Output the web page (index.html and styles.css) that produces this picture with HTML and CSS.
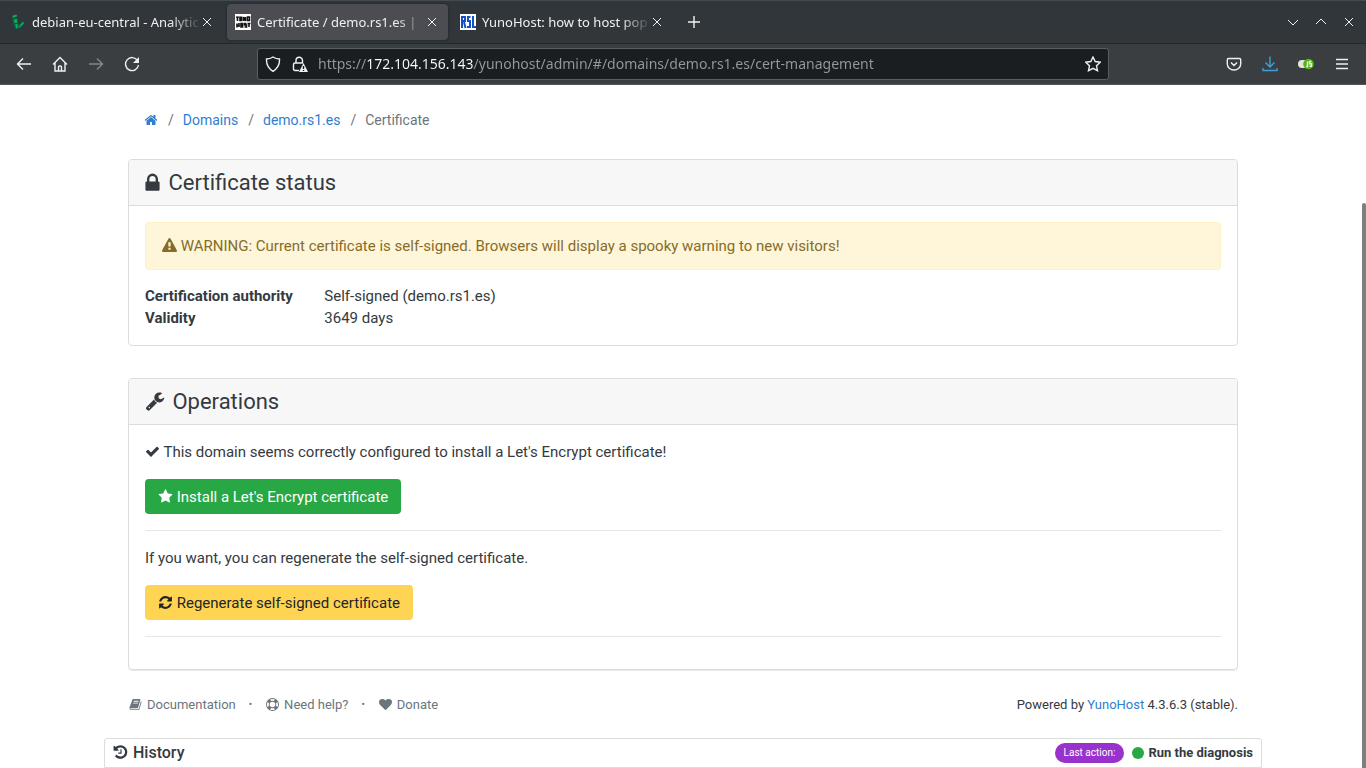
FILE: index.html
```html
<!DOCTYPE html>
<html lang="en">
	<head>
		<meta charset="UTF-8">
		<meta name="viewport" content="width=device-width, initial-scale=1">
		<title>Certificate / demo.rs1.es | YunoHost Admin</title>
		<link rel="stylesheet" href="styles.css">
	</head>
	<body>

		<div class="browser">
			<div class="tabs">
				<div class="tab">
					<svg class="favicon" viewBox="0 0 16 16"><path fill="#00b159" d="M2 2l4-1.500 1.500 1.500-4 2zM3 6l4-1.500.5 4-3.500 1zM5 10.500l2.500-1 .5 4-2 1.500zM9 12l4-4.500 1 2-5 5z"/><path fill="#0b6b45" d="M2 2l1.500 2L4.500 8 4 9 3 7zM4 9.500l1 1 1 4.500-1.500-1.500zM8.500 9.500l1.500 1.500-1 3.500-1-2z"/></svg>
					<span class="tab-title">debian-eu-central - Analytic</span>
					<button class="tab-close" aria-label="Close tab"><svg viewBox="0 0 10 10"><path d="M1 1l8 8M9 1l-8 8"/></svg></button>
				</div>
				<div class="tab active">
					<svg class="favicon" viewBox="0 0 16 16"><path fill="#fff" d="M0 0h16v16H0z"/><path fill="none" stroke="#111" stroke-width="1.6" d="M1.500 2.500l1 2 1-2M2.500 5v2M5 2.500v4h1.500v-4M8.500 7V3l2 4V3M12.500 3h2v3.500h-2zM2 9.500v4M4 9v4M2 11.500h2M6 9.500h1.500V13H6zM11.500 9.500h-2v1.500h2v2h-2M12.500 9.500h3M14 9.500V13"/></svg>
					<span class="tab-title">Certificate / demo.rs1.es |</span>
					<button class="tab-close" aria-label="Close tab"><svg viewBox="0 0 10 10"><path d="M1 1l8 8M9 1l-8 8"/></svg></button>
				</div>
				<div class="tab">
					<svg class="favicon" viewBox="0 0 16 16"><path fill="#fff" d="M0 0h16v16H0z"/><path fill="none" stroke="#1450c8" stroke-width="2" d="M2 14V3h3v4H2M4 8l1.500 6M10.500 3H8v4h2v6H7M13 2v11h3"/></svg>
					<span class="tab-title">YunoHost: how to host pop</span>
					<button class="tab-close" aria-label="Close tab"><svg viewBox="0 0 10 10"><path d="M1 1l8 8M9 1l-8 8"/></svg></button>
				</div>
				<button class="new-tab" aria-label="New tab"><svg viewBox="0 0 12 12"><path d="M6 0v12M0 6h12"/></svg></button>
				<div class="window-controls">
					<button aria-label="Minimize"><svg viewBox="0 0 12 12"><path d="M1 4l5 5 5-5"/></svg></button>
					<button aria-label="Maximize"><svg viewBox="0 0 12 12"><path d="M1 8l5-5 5 5"/></svg></button>
					<button aria-label="Close"><svg viewBox="0 0 12 12"><path d="M2 2l8 8M10 2l-8 8"/></svg></button>
				</div>
			</div>

			<div class="toolbar">
				<div class="nav-buttons">
					<button aria-label="Back"><svg viewBox="0 0 16 16"><path d="M15 8H1.500M7 2.500L1.500 8 7 13.500"/></svg></button>
					<button aria-label="Home"><svg viewBox="0 0 16 16"><path d="M1 8.500l7-7 7 7M3 7v8h10V7M6.500 15v-4q0-1 1-1h1q1 0 1 1v4"/></svg></button>
					<button aria-label="Forward" disabled><svg viewBox="0 0 16 16"><path d="M1 8h13.500M9 2.500L14.500 8 9 13.500"/></svg></button>
					<button aria-label="Reload"><svg viewBox="0 0 16 16"><path d="M13.500 4.500A6.500 6.500 0 1 0 14.500 9"/><path class="solid" d="M15 1v6H9z"/></svg></button>
				</div>
				<div class="url-bar">
					<svg class="shield" viewBox="0 0 16 16"><path d="M8 1q3 2 6.500 2 .5 8-6.500 12.300Q1 11 1.500 3 5 3 8 1z"/></svg>
					<svg class="insecure" viewBox="0 0 16 16"><path d="M7 14.500H3q-1.500 0-1.500-1.500V8.500Q1.500 7 3 7h8M4 7V4.500a3.200 3.200 0 0 1 6.500 0V7"/><path class="solid" d="M11.500 7l4.500 9H7z"/><path class="mark" d="M11.500 10v3M11.500 14v1"/></svg>
					<input type="text" class="url" aria-label="Address" value="https://172.104.156.143/yunohost/admin/#/domains/demo.rs1.es/cert-management">
					<button aria-label="Bookmark"><svg viewBox="0 0 16 16"><path d="M8 1l2.200 4.500 5 .7-3.700 3.500 1 5L8 12.300l-4.500 2.400 1-5L.8 6.200l5-.7z"/></svg></button>
				</div>
				<div class="tools">
					<button aria-label="Pocket"><svg viewBox="0 0 16 16"><path d="M2.500 2.500h11q1.200 0 1.200 1.200V8a6.700 6 0 0 1-13.400 0V3.700q0-1.200 1.200-1.200zM5 6.500l3 3 3-3"/></svg></button>
					<button class="download" aria-label="Downloads"><svg viewBox="0 0 16 16"><path d="M8 .5v10M3.500 6.500L8 11l4.500-4.500M1 12v2.500h14V12"/></svg></button>
					<button aria-label="JavaScript toggle"><svg class="js-toggle" viewBox="0 0 16 16"><rect class="track" x="0" y="4" width="14" height="8" rx="4"/><circle class="knob" cx="10.500" cy="8" r="5.300"/><path d="M9.500 5.500v5H8M13.500 5.500h-2v2.300h2v2.500h-2"/></svg></button>
					<button aria-label="Menu"><svg viewBox="0 0 16 16"><path d="M2 3.500h12M2 8h12M2 12.500h12"/></svg></button>
				</div>
			</div>
		</div>

		<div class="container">
			<nav aria-label="breadcrumb">
				<ol class="breadcrumb">
					<li><a href="#/" aria-label="Home"><svg class="icon" viewBox="0 0 1792 1792"><path d="M1472 992v480q0 26-19 45t-45 19h-384v-384h-256v384h-384q-26 0-45-19t-19-45v-480q0-1 .5-3t.5-3l575-474 575 474q1 2 1 6zm223-69l-62 74q-8 9-21 11h-3q-13 0-21-7l-692-577-692 577q-12 8-24 7-13-2-21-11l-62-74q-8-10-7-23.5t11-21.5l719-599q32-26 76-26t76 26l244 204v-195q0-14 9-23t23-9h192q14 0 23 9t9 23v408l219 182q10 8 11 21.5t-7 23.5z"/></svg></a></li>
					<li><a href="#/domains">Domains</a></li>
					<li><a href="#/domains/demo.rs1.es">demo.rs1.es</a></li>
					<li>Certificate</li>
				</ol>
			</nav>

			<main>
				<section class="card">
					<h2 class="card-header">
						<svg class="icon icon-lock" viewBox="320 0 1152 1792"><path d="M640 768h512v-192q0-106-75-181t-181-75-181 75-75 181v192zm832 96v576q0 40-28 68t-68 28h-960q-40 0-68-28t-28-68v-576q0-40 28-68t68-28h32v-192q0-184 132-316t316-132 316 132 132 316v192h32q40 0 68 28t28 68z"/></svg>
						Certificate status
					</h2>
					<div class="card-body">
						<div class="alert">
							<svg class="icon" viewBox="0 0 1792 1792"><path d="M1024 1375v-190q0-14-9.5-23.5t-22.5-9.5h-192q-13 0-22.5 9.5t-9.500 23.5v190q0 14 9.500 23.5t22.500 9.500h192q13 0 22.500-9.500t9.500-23.500zm-2-374l18-459q0-12-10-19-13-11-24-11h-220q-11 0-24 11-10 7-10 21l17 457q0 10 10 16.500t24 6.500h185q14 0 23.500-6.500t10.500-16.500zm-14-934l768 1408q35 63-2 126-17 29-46.500 46t-63.500 17h-1536q-34 0-63.500-17t-46.500-46q-37-63-2-126l768-1408q17-31 47-49t65-18 65 18 47 49z"/></svg>
							WARNING: Current certificate is self-signed. Browsers will display a spooky warning to new visitors!
						</div>
						<dl class="info">
							<dt>Certification authority</dt>
							<dd>Self-signed (demo.rs1.es)</dd>
							<dt>Validity</dt>
							<dd>3649 days</dd>
						</dl>
					</div>
				</section>

				<section class="card">
					<h2 class="card-header">
						<svg class="icon" viewBox="0 0 1792 1792"><path d="M448 1472q0-26-19-45t-45-19-45 19-19 45 19 45 45 19 45-19 19-45zm644-420l-682 682q-37 37-90 37-52 0-91-37l-106-108q-38-36-38-90 0-53 38-91l681-681q39 98 114.500 173.500t173.500 114.500zm634-435q0 39-23 106-47 134-164.500 217.500t-258.500 83.500q-185 0-316.500-131.500t-131.500-316.500 131.500-316.500 316.500-131.500q58 0 121.500 16.500t107.500 46.500q16 11 16 28t-16 28l-293 169v224l193 107q5-3 79-48.500t135.500-81 70.500-35.500q15 0 23.500 10t8.500 25z"/></svg>
						Operations
					</h2>
					<div class="card-body">
						<p>
							<svg class="icon" viewBox="0 0 1792 1792"><path d="M1671 566q0 40-28 68l-724 724-136 136q-28 28-68 28t-68-28l-136-136-362-362q-28-28-28-68t28-68l136-136q28-28 68-28t68 28l294 295 656-657q28-28 68-28t68 28l136 136q28 28 28 68z"/></svg>
							This domain seems correctly configured to install a Let's Encrypt certificate!
						</p>
						<button class="btn btn-success">
							<svg class="icon" viewBox="0 0 1792 1792"><path d="M1728 647q0 22-26 48l-363 354 86 500q1 7 1 20 0 21-10.500 35.500t-30.500 14.500q-19 0-40-12l-449-236-449 236q-22 12-40 12-21 0-31.500-14.500t-10.500-35.500q0-6 2-20l86-500-364-354q-25-27-25-48 0-37 56-46l502-73 225-455q19-41 49-41t49 41l225 455 502 73q56 9 56 46z"/></svg>
							Install a Let's Encrypt certificate
						</button>
						<hr>
						<p>If you want, you can regenerate the self-signed certificate.</p>
						<button class="btn btn-warning">
							<svg class="icon" viewBox="0 0 1792 1792"><path d="M1639 1056q0 5-1 7-64 268-268 434.500t-478 166.500q-146 0-282.500-55t-243.500-157l-129 129q-19 19-45 19t-45-19-19-45v-448q0-26 19-45t45-19h448q26 0 45 19t19 45-19 45l-137 137q71 66 161 102t187 36q134 0 250-65t186-179q11-17 53-117 8-23 30-23h192q13 0 22.500 9.500t9.500 22.500zm25-800v448q0 26-19 45t-45 19h-448q-26 0-45-19t-19-45 19-45l138-138q-148-137-349-137-134 0-250 65t-186 179q-11 17-53 117-8 23-30 23h-199q-13 0-22.500-9.500t-9.500-22.500v-7q65-268 270-434.500t480-166.500q146 0 284 55.500t245 156.500l130-129q19-19 45-19t45 19 19 45z"/></svg>
							Regenerate self-signed certificate
						</button>
						<hr>
					</div>
				</section>
			</main>

			<footer class="footer">
				<nav class="footer-links">
					<a href="#docs"><svg class="icon" viewBox="0 0 1792 1792"><path d="M1703 478q40 57 18 129l-275 906q-19 64-76.500 107.500t-122.500 43.500h-923q-77 0-148.500-53.500t-99.500-131.500q-24-67-2-127 0-4 3-27t4-37q1-8-3-21.500t-3-19.500q2-11 8-21t16.500-23.500 16.500-23.500q23-38 45-91.500t30-91.500q3-10 .5-30t-.5-28q3-11 17-28t17-23q21-36 42-92t25-90q1-9-2.500-32t.5-28q4-13 22-30.500t22-22.500q19-26 42.500-84.500t27.500-96.500q1-8-3-25.500t-2-26.500q2-8 9-18t18-23 17-21q8-12 16.500-30.500t15-35 16-36 19.500-32 26.500-23.500 36-11.500 47.500 5.500l-1 3q38-9 51-9h761q74 0 114 56t18 130l-274 906q-36 119-71.500 153.500t-128.500 34.500h-869q-27 0-38 15-11 16-1 43 24 70 144 70h923q29 0 56-15.500t35-41.500l300-987q7-22 5-57 38 15 59 43zm-1064 2q-4 13 2 22.500t20 9.500h608q13 0 25.500-9.500t16.500-22.500l21-64q4-13-2-22.500t-20-9.500h-608q-13 0-25.500 9.500t-16.500 22.500zm-83 256q-4 13 2 22.500t20 9.500h608q13 0 25.500-9.500t16.500-22.500l21-64q4-13-2-22.500t-20-9.500h-608q-13 0-25.500 9.500t-16.500 22.500z"/></svg>Documentation</a>
					<span class="dot">•</span>
					<a href="#help"><svg class="icon" viewBox="0 0 14 14"><path fill-rule="evenodd" d="M7 0a7 7 0 1 1 0 14A7 7 0 0 1 7 0zM7 4a3 3 0 1 0 0 6 3 3 0 0 0 0-6zM4.300 1.700L5.700 3.200a4 4 0 0 1 2.600 0L9.700 1.700a6 6 0 0 0-5.400 0zM4.300 12.300a6 6 0 0 0 5.400 0l-1.400-1.500a4 4 0 0 1-2.600 0zM1.700 4.300a6 6 0 0 0 0 5.400l1.500-1.400a4 4 0 0 1 0-2.600zM12.300 4.300l-1.500 1.400a4 4 0 0 1 0 2.600l1.500 1.400a6 6 0 0 0 0-5.400z"/></svg>Need help?</a>
					<span class="dot">•</span>
					<a href="#donate"><svg class="icon" viewBox="0 0 1792 1792"><path d="M896 1664q-26 0-44-18l-624-602q-10-8-27.500-26t-55.500-65.500-68-97.500-53.500-121-23.500-138q0-220 127-344t351-124q62 0 126.500 21.500t120 58 95.500 68.500 76 68q36-36 76-68t95.500-68.500 120-58 126.500-21.500q224 0 351 124t127 344q0 221-229 450l-623 600q-18 18-44 18z"/></svg>Donate</a>
				</nav>
				<p class="powered">Powered by <a href="#yunohost">YunoHost</a> 4.3.6.3 (stable).</p>
			</footer>
		</div>

		<div class="history">
			<h2>
				<svg class="icon" viewBox="128 0 1664 1792"><path d="M1664 896q0 156-61 298t-164 245-245 164-298 61q-172 0-327-72.500t-264-204.500q-7-10-6.500-22.500t8.500-20.500l137-138q10-9 25-9 16 2 23 12 73 95 179 147t225 52q104 0 198.500-40.500t163.500-109.500 109.500-163.500 40.500-198.500-40.500-198.500-109.500-163.500-163.500-109.500-198.500-40.500q-98 0-188 35.500t-160 101.500l137 138q31 30 14 69-17 40-59 40h-448q-26 0-45-19t-19-45v-448q0-42 40-59 39-17 69 14l130 129q107-101 244.500-156.500t284.500-55.500q156 0 298 61t245 164 164 245 61 298zm-640-288v448q0 14-9 23t-23 9h-320q-14 0-23-9t-9-23v-64q0-14 9-23t23-9h224v-352q0-14 9-23t23-9h64q14 0 23 9t9 23z"/></svg>
				History
			</h2>
			<div class="last-action">
				<span class="badge">Last action:</span>
				<span class="status"></span>
				<strong>Run the diagnosis</strong>
			</div>
		</div>

		<div class="scroll-thumb"></div>
	</body>
</html>
```
FILE: styles.css
```css
*{
	box-sizing:border-box;
}
body{
	margin:0;
	padding:0;
	min-height:100vh;
	display:flex;
	flex-direction:column;
	background:#fff;
	color:#343a40;
	font-family:Roboto, sans-serif;
	font-size:14px;
	line-height:22px;
}
a{
	color:#2f7ed0;
	text-decoration:none;
}
button{
	font:inherit;
	color:inherit;
	border:0;
	padding:0;
	background:none;
}

/* browser window */
.browser{
	background:#3b3e41;
	color:#eff0f1;
	border-bottom:1px solid #54585b;
	font-family:"Noto Sans", sans-serif;
	font-size:13px;
}
.browser svg{
	display:block;
	width:16px;
	height:16px;
	flex:none;
}
.browser button svg,
.url-bar svg{
	fill:none;
	stroke:currentColor;
	stroke-width:1.4;
}
.browser svg .solid{
	fill:currentColor;
	stroke:none;
}
.browser svg .mark{
	stroke:#1b1e20;
}
.js-toggle .track{
	fill:#e4e4e0;
	stroke:none;
}
.js-toggle .knob{
	fill:#52b70d;
	stroke:none;
}

.tabs{
	display:flex;
	align-items:center;
	gap:4px;
	height:44px;
	padding:0 11px 0 2px;
	background:#31363b;
	border-top:1px solid #434a52;
	border-bottom:1px solid #25282b;
}
.tab{
	display:flex;
	align-items:center;
	width:221px;
	height:36px;
	padding:0 11px 0 8px;
	border-radius:4px;
}
.tab.active{
	background:#4b4d52;
	box-shadow:0 0 3px #1f2225;
}
.favicon{
	margin-right:6px;
}
.tab-title{
	flex:1;
	min-width:0;
	overflow:hidden;
	white-space:nowrap;
	-webkit-mask-image:linear-gradient(to left, transparent, #000 32px);
	mask-image:linear-gradient(to left, transparent, #000 32px);
}
.browser .tab-close svg{
	width:10px;
	height:10px;
	stroke-width:1;
}
.new-tab{
	margin-left:11px;
}
.browser .new-tab svg{
	width:12px;
	height:12px;
}
.window-controls{
	display:flex;
	gap:16px;
	margin-left:auto;
}
.browser .window-controls svg{
	width:12px;
	height:12px;
	stroke-width:1;
}

.toolbar{
	display:flex;
	align-items:center;
	height:40px;
	padding:0 16px;
}
.nav-buttons,
.tools{
	display:flex;
	gap:20px;
}
.nav-buttons button:disabled{
	opacity:.4;
}
.download{
	color:#3d9fd6;
}
.url-bar{
	flex:1;
	display:flex;
	align-items:center;
	height:32px;
	margin:0 117px;
	padding:0 7px;
	background:#1b1e20;
	border:1px solid #5b5e61;
	border-radius:3px;
}
.insecure{
	margin:0 10px 0 11px;
}
.url{
	flex:1;
	min-width:0;
	height:24px;
	padding:0;
	border:0;
	outline:0;
	font:14px/24px "Noto Sans", sans-serif;
	color:transparent;
	/* host part is brighter than the rest of the address */
	background:linear-gradient(90deg, #96999b 48px, #fcfcfc 48px, #fcfcfc 156px, #96999b 156px);
	-webkit-background-clip:text;
	background-clip:text;
}

/* page */
.container{
	width:100%;
	max-width:1142px;
	margin:0 auto;
	padding:0 16px;
}
.icon{
	width:1em;
	height:1em;
	fill:currentColor;
	vertical-align:-2px;
}
.breadcrumb{
	display:flex;
	list-style:none;
	margin:0;
	padding:24px 16px 28px;
	color:#6c757d;
}
.breadcrumb li + li::before{
	content:"/";
	padding:0 9px 0 10px;
}

.card{
	margin-bottom:32px;
	border:1px solid #dcdcdc;
	border-radius:4px;
}
.card:last-child{
	margin-bottom:24px;
	box-shadow:0 1px 0 #ebebeb;
}
.card-header{
	margin:0;
	padding:9px 16px;
	background:#f7f7f7;
	border-bottom:1px solid #dcdcdc;
	border-radius:3px 3px 0 0;
	font-size:22px;
	font-weight:400;
	line-height:27px;
}
.card-header .icon{
	width:20px;
	height:20px;
	margin-right:2px;
}
.card-header .icon-lock{
	width:15px;
	height:22px;
	margin-right:3px;
	vertical-align:-4px;
}
.card-body{
	padding:16px;
	font-size:15px;
}
.card-body p{
	margin:0 0 16px;
}
.alert{
	padding:12px 16px;
	margin-bottom:15px;
	color:#856d29;
	background:#fff5d9;
	border:1px solid #fff0c8;
	border-radius:4px;
}
.info{
	display:grid;
	grid-template-columns:1fr 5fr;
	margin:0;
}
.info dt{
	font-weight:700;
}
.info dd{
	margin:0;
}
.btn{
	display:block;
	height:35px;
	padding:0 13px;
	border-radius:4px;
}
.btn-success{
	color:#fff;
	background:#28a745;
}
.btn-warning{
	color:#212529;
	background:#ffd452;
}
hr{
	height:1px;
	margin:16px 0;
	border:0;
	background:#e6e6e6;
}

.footer{
	display:flex;
	justify-content:space-between;
	align-items:center;
	margin-bottom:22px;
	font-size:13px;
}
.footer-links{
	display:flex;
	gap:13px;
}
.footer-links,
.footer-links a{
	color:#6c757d;
}
.footer-links .icon{
	margin:0 5px 0 1px;
}
.dot{
	font-size:10px;
}
.powered{
	margin:0;
}

.history{
	display:flex;
	justify-content:space-between;
	align-items:center;
	width:calc(100% - 32px);
	max-width:1158px;
	height:30px;
	margin:0 auto;
	padding:0 8px;
	border:1px solid #dcdcdc;
	border-radius:3px 3px 0 0;
}
.history h2{
	margin:0;
	font-size:16px;
	font-weight:500;
}
.last-action{
	display:flex;
	align-items:center;
	font-size:13px;
}
.badge{
	padding:0 9px;
	font-size:10px;
	line-height:20px;
	color:#fff;
	background:#9932cc;
	border-radius:10px;
}
.status{
	width:12px;
	height:12px;
	margin:0 4px 0 8px;
	background:#28a745;
	border-radius:50%;
}

.scroll-thumb{
	position:fixed;
	top:203px;
	right:0;
	bottom:0;
	width:4px;
	background:#7f7f7f;
	border-radius:2px 2px 0 0;
}
```
